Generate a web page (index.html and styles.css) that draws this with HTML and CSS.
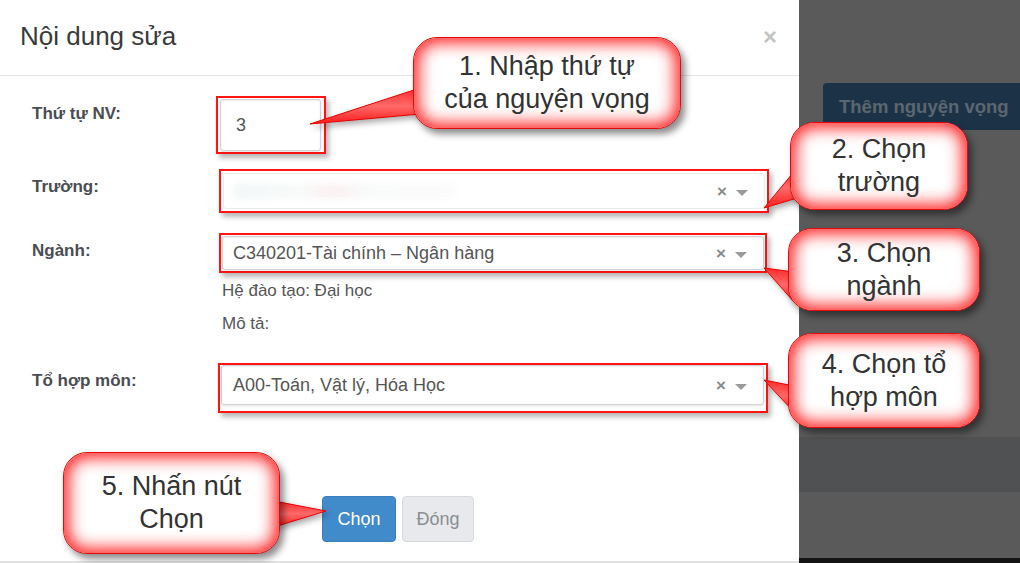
FILE: index.html
```html
<!DOCTYPE html>
<html lang="vi">
<head>
<meta charset="utf-8">
<title>Nội dung sửa</title>
<link rel="stylesheet" href="styles.css">
</head>
<body>
<div class="screen">
  <section class="modal">
    <header class="modal-header">
      <h4 class="modal-title">Nội dung sửa</h4>
      <span class="close">×</span>
    </header>
    <div class="modal-body">
      <div class="row row-1">
        <label class="lbl">Thứ tự NV:</label>
        <div class="mark mark-1"><div class="control input-num">3</div></div>
      </div>
      <div class="row row-2">
        <label class="lbl">Trường:</label>
        <div class="mark mark-2">
          <div class="control select">
            <span class="blurred"></span>
            <span class="clear">×</span><span class="caret"></span>
          </div>
        </div>
      </div>
      <div class="row row-3">
        <label class="lbl">Ngành:</label>
        <div class="mark mark-3">
          <div class="control select">
            <span class="value">C340201-Tài chính – Ngân hàng</span>
            <span class="clear">×</span><span class="caret"></span>
          </div>
        </div>
      </div>
      <div class="info">
        <p class="info-line first">Hệ đào tạo: Đại học</p>
        <p class="info-line">Mô tả:</p>
      </div>
      <div class="row row-4">
        <label class="lbl">Tổ hợp môn:</label>
        <div class="mark mark-4">
          <div class="control select">
            <span class="value">A00-Toán, Vật lý, Hóa Học</span>
            <span class="clear">×</span><span class="caret"></span>
          </div>
        </div>
      </div>
    </div>
    <footer class="modal-footer">
      <button class="btn btn-primary">Chọn</button>
      <button class="btn btn-default">Đóng</button>
    </footer>
  </section>
  <aside class="backdrop">
    <div class="add-btn">Thêm nguyện vọng</div>
    <div class="band"></div>
    <div class="spacer"></div>
    <div class="base-line"></div>
  </aside>
</div>

<svg class="tails" width="1020" height="563" viewBox="0 0 1020 563">
  <defs>
    <linearGradient id="tg" x1="0" y1="0" x2="0" y2="1">
      <stop offset="0" stop-color="#ff2a2a"/>
      <stop offset="0.5" stop-color="#ff6a6a"/>
      <stop offset="1" stop-color="#ff1a1a"/>
    </linearGradient>
  </defs>
  <polygon points="310,124 420,88 420,114" fill="url(#tg)" stroke="#e80000" stroke-width="1"/>
  <polygon points="764,208 797,168 797,198" fill="url(#tg)" stroke="#e80000" stroke-width="1"/>
  <polygon points="764,268 794,272 794,302" fill="url(#tg)" stroke="#e80000" stroke-width="1"/>
  <polygon points="764,380 794,386 794,412" fill="url(#tg)" stroke="#e80000" stroke-width="1"/>
  <polygon points="326,511 274,501 274,527" fill="url(#tg)" stroke="#e80000" stroke-width="1"/>
</svg>

<div class="callout callout-1">1. Nhập thứ tự<br>của nguyện vọng</div>
<div class="callout callout-2">2. Chọn<br>trường</div>
<div class="callout callout-3">3. Chọn<br>ngành</div>
<div class="callout callout-4">4. Chọn tổ<br>hợp môn</div>
<div class="callout callout-5">5. Nhấn nút<br>Chọn</div>
</body>
</html>
```

FILE: styles.css
```css
* { box-sizing: border-box; }

html, body {
  margin: 0;
  padding: 0;
}

body {
  width: 1020px;
  height: 563px;
  overflow: hidden;
  position: relative;
  font-family: "Liberation Sans", Arial, sans-serif;
  background: #5a5a5a;
}

.screen {
  display: flex;
  width: 1020px;
  height: 563px;
}

/* ---------- modal ---------- */
.modal {
  width: 799px;
  height: 563px;
  background: #fff;
  border-bottom: 2px solid #e2e2e2;
  display: flex;
  flex-direction: column;
}

.modal-header {
  height: 76px;
  border-bottom: 1px solid #e5e5e5;
  display: flex;
  align-items: center;
  padding: 0 22px 2px 20px;
}

.modal-title {
  margin: 0;
  font-size: 26px;
  font-weight: normal;
  color: #3a3a3a;
}

.close {
  margin-left: auto;
  font-size: 24px;
  font-weight: bold;
  color: #c4c4c4;
  line-height: 1;
}

.modal-body {
  padding: 20px 0 0 32px;
}

.row {
  display: flex;
  align-items: flex-start;
}

.lbl {
  width: 184px;
  padding-top: 8px;
  font-size: 17px;
  line-height: 20px;
  font-weight: bold;
  color: #4a4d52;
}

.row-1 { margin-bottom: 15px; }
.row-2 { margin-bottom: 20px; }

.mark {
  border: 2px solid #ff1414;
  box-shadow: 3px 4px 5px rgba(0, 0, 0, 0.28);
  display: flex;
}

.mark-1 { width: 110px; height: 58px; padding: 1px 3px 1px 2px; }
.mark-2 { width: 550px; height: 44px; padding: 2px; margin-left: 3px; }
.mark-3 { width: 548px; height: 40px; padding: 1px; margin-left: 3px; }
.mark-4 { width: 550px; height: 50px; padding: 0 2px 6px 1px; margin-left: 2px; }

.control {
  flex: 1;
  display: flex;
  align-items: center;
  border: 1px solid #d2d2d2;
  border-radius: 3px;
  box-shadow: inset 0 1px 2px rgba(0, 0, 0, 0.08), 0 1px 3px rgba(0, 0, 0, 0.12);
  background: #fff;
  font-size: 18px;
  color: #555;
}

.input-num { padding-left: 15px; }

.select { padding: 0 16px 0 10px; }
.mark-4 .select { padding-left: 11px; }
.mark-2 .select { border-color: #ececec; box-shadow: none; }

.value { white-space: nowrap; }

.blurred {
  width: 220px;
  height: 14px;
  background: linear-gradient(90deg, #e4eeee 0%, #f2f5f5 30%, #f8e2e2 45%, #f3f5f5 60%, #f7f7f7 100%);
  filter: blur(4px);
  opacity: 0.55;
}

.clear {
  margin-left: auto;
  font-size: 17px;
  font-weight: bold;
  color: #8a8a8a;
  line-height: 1;
}

.caret {
  margin-left: 9px;
  margin-top: 4px;
  width: 0;
  height: 0;
  border-left: 6px solid transparent;
  border-right: 6px solid transparent;
  border-top: 6px solid #9a9a9a;
}

.info {
  padding-left: 190px;
}

.info-line {
  margin: 13px 0 0;
  font-size: 17px;
  line-height: 20px;
  color: #555;
}

.info-line.first { margin-top: 8px; }

.row-4 { margin-top: 29px; }

.modal-footer {
  padding: 83px 0 0 322px;
  display: flex;
  gap: 6px;
}

.btn {
  height: 46px;
  border-radius: 4px;
  font-family: "Liberation Sans", Arial, sans-serif;
  font-size: 18px;
  padding: 0;
  cursor: pointer;
}

.btn-primary {
  width: 74px;
  background: #428bca;
  border: 1px solid #3a7fbc;
  color: #fff;
}

.btn-default {
  width: 72px;
  background: #e7e9ec;
  border: 1px solid #d7d9dc;
  color: #8a8d91;
}

/* ---------- backdrop ---------- */
.backdrop {
  flex: 1;
  display: flex;
  flex-direction: column;
  background: #5a5a5a;
}

.add-btn {
  margin: 83px 0 0 24px;
  height: 47px;
  line-height: 47px;
  padding-left: 16px;
  background: #1c3347;
  border-radius: 4px 0 0 4px;
  color: #5c6670;
  font-size: 18.5px;
  font-weight: bold;
  white-space: nowrap;
  overflow: hidden;
}

.band {
  margin-top: 307px;
  height: 55px;
  background: #505153;
}

.spacer { flex: 1; }

.base-line {
  height: 5px;
  background: #141414;
}

/* ---------- annotations ---------- */
.tails {
  position: absolute;
  left: 0;
  top: 0;
  pointer-events: none;
  filter: drop-shadow(3px 3px 3px rgba(0, 0, 0, 0.35));
}

.callout {
  position: absolute;
  display: flex;
  align-items: center;
  justify-content: center;
  text-align: center;
  background: #fff;
  border: 1px solid #e20a0a;
  border-radius: 24px;
  box-shadow: inset 0 0 16px 5px #ff2626, 4px 5px 7px rgba(0, 0, 0, 0.45);
  font-size: 27px;
  line-height: 33px;
  color: #333;
}

.callout-1 { left: 413px; top: 37px; width: 268px; height: 92px; }
.callout-2 { left: 790px; top: 122px; width: 178px; height: 88px; }
.callout-3 { left: 788px; top: 228px; width: 192px; height: 83px; }
.callout-4 { left: 788px; top: 333px; width: 192px; height: 95px; }
.callout-5 { left: 63px; top: 452px; width: 217px; height: 102px; }
```
